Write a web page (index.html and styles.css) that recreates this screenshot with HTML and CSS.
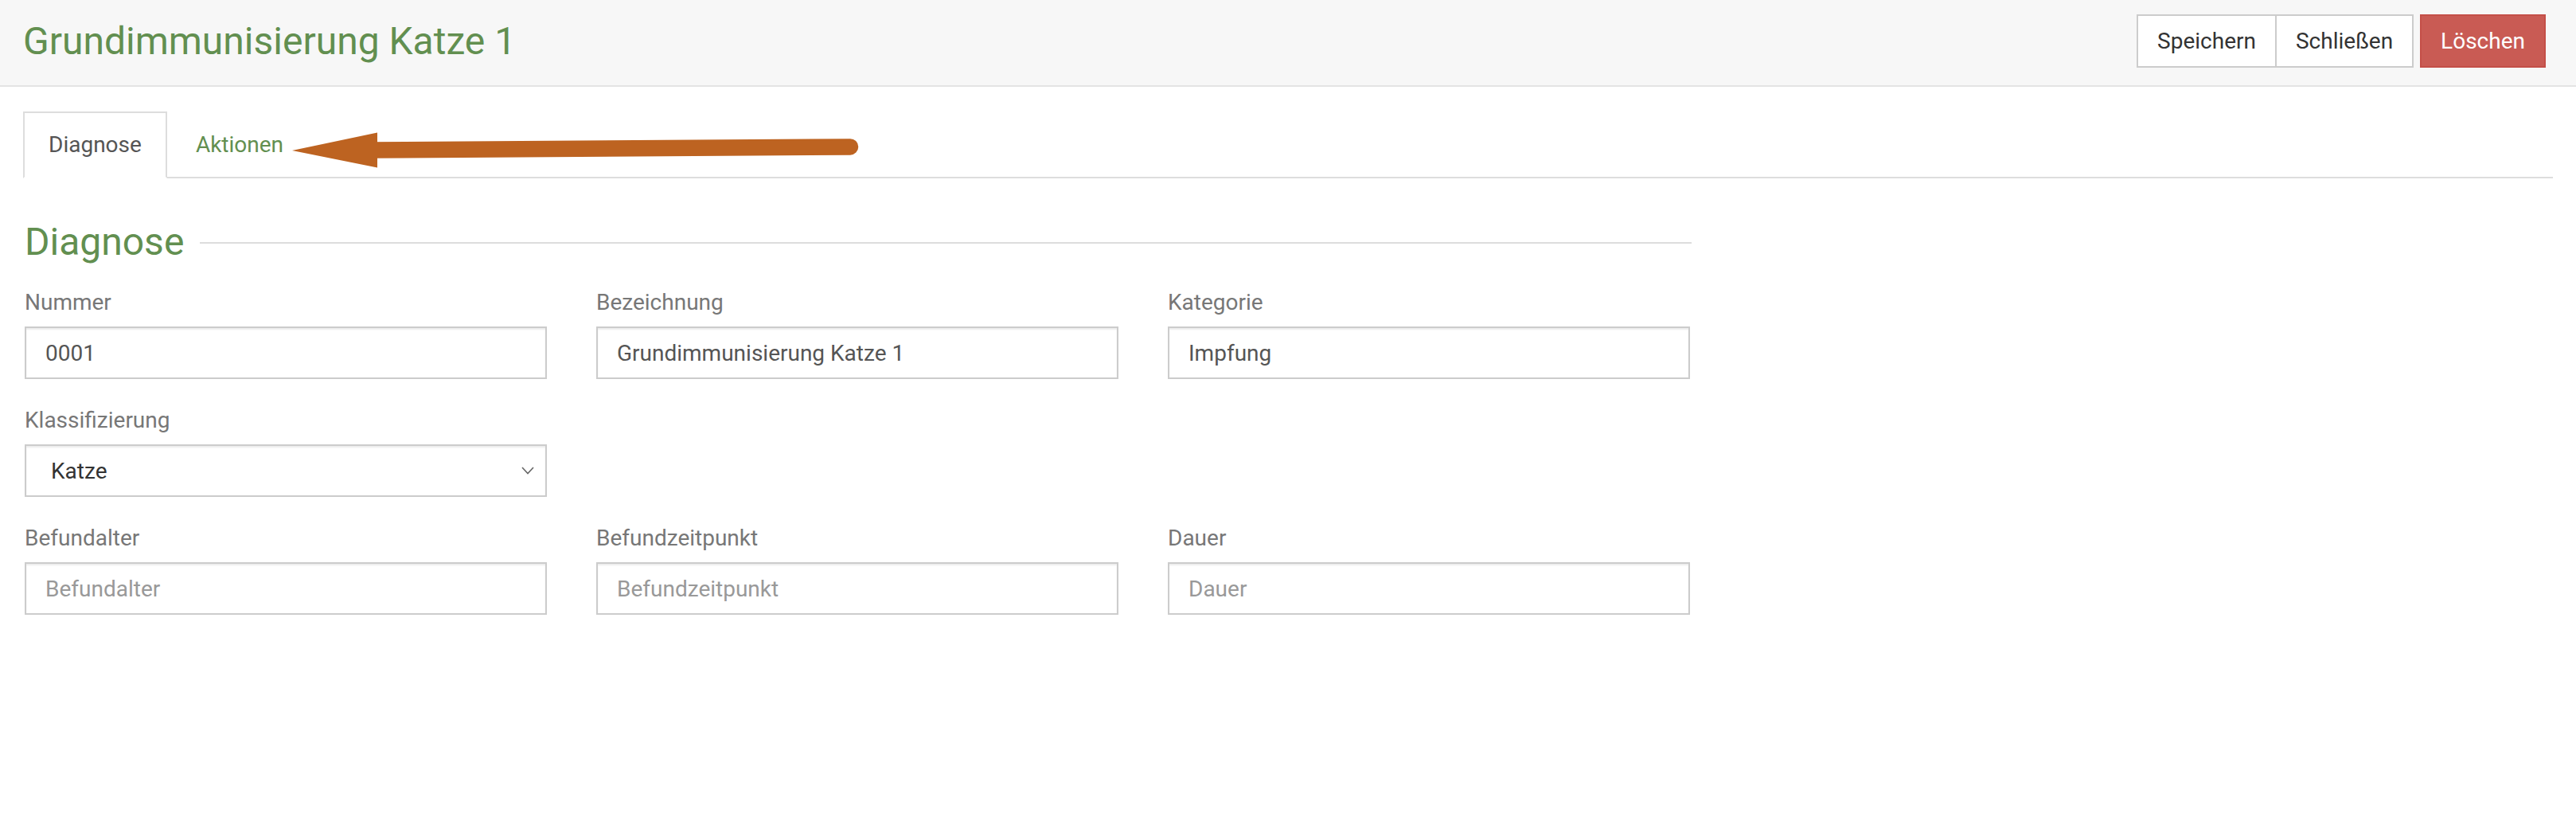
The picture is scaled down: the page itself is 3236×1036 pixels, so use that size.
FILE: index.html
```html
<!DOCTYPE html>
<html lang="de">
<head>
<meta charset="utf-8">
<title>Grundimmunisierung Katze 1</title>
<link rel="stylesheet" href="styles.css">
</head>
<body>
<div class="page">
  <header class="topbar">
    <h1 class="title">Grundimmunisierung Katze 1</h1>
    <div class="actions">
      <div class="btn-group">
        <button class="btn">Speichern</button>
        <button class="btn">Schließen</button>
      </div>
      <button class="btn btn-danger">Löschen</button>
    </div>
  </header>

  <main class="content">
    <ul class="tabs">
      <li class="tab active">Diagnose</li>
      <li class="tab link">Aktionen</li>
    </ul>

    <section class="fieldset">
      <div class="legend">
        <h2 class="legend-text">Diagnose</h2>
        <span class="legend-line"></span>
      </div>

      <div class="row">
        <div class="field">
          <label class="label">Nummer</label>
          <input class="input" type="text" value="0001">
        </div>
        <div class="field">
          <label class="label">Bezeichnung</label>
          <input class="input" type="text" value="Grundimmunisierung Katze 1">
        </div>
        <div class="field">
          <label class="label">Kategorie</label>
          <input class="input" type="text" value="Impfung">
        </div>
      </div>

      <div class="row">
        <div class="field">
          <label class="label">Klassifizierung</label>
          <div class="select-wrap">
            <select class="input select">
              <option>Katze</option>
            </select>
            <svg class="chevron" width="16" height="10" viewBox="0 0 16 10"><path d="M1 1 L8 8.5 L15 1" fill="none" stroke="#666" stroke-width="1.6"/></svg>
          </div>
        </div>
      </div>

      <div class="row">
        <div class="field">
          <label class="label">Befundalter</label>
          <input class="input" type="text" placeholder="Befundalter">
        </div>
        <div class="field">
          <label class="label">Befundzeitpunkt</label>
          <input class="input" type="text" placeholder="Befundzeitpunkt">
        </div>
        <div class="field">
          <label class="label">Dauer</label>
          <input class="input" type="text" placeholder="Dauer">
        </div>
      </div>
    </section>
  </main>

  <svg class="annotation" width="1100" height="240" viewBox="0 0 1100 240">
    <path d="M466 188.6 L1068 184.4" stroke="#bd6321" stroke-width="20.5" stroke-linecap="round" fill="none"/>
    <polygon points="367,189 474,166.5 474,210.5" fill="#bd6321"/>
  </svg>
</div>
</body>
</html>
```

FILE: styles.css
```css
* { box-sizing: border-box; }

html, body {
  margin: 0;
  padding: 0;
  background: #ffffff;
}

body {
  font-family: Roboto, "Liberation Sans", Arial, sans-serif;
  font-size: 28px;
  line-height: 40px;
  color: #333333;
}

.page {
  position: relative;
  width: 3236px;
  min-height: 1036px;
}

/* Header */
.topbar {
  height: 109px;
  background: #f7f7f7;
  border-bottom: 2px solid #e4e4e4;
  display: flex;
  align-items: center;
  justify-content: space-between;
  padding: 0 38px 4px 29px;
}

.title {
  margin: 0;
  font-size: 48px;
  line-height: 53px;
  font-weight: 400;
  color: #628f50;
}

.actions {
  display: flex;
  align-items: center;
  gap: 8px;
}

.btn-group {
  display: flex;
}

.btn {
  font-family: inherit;
  font-size: 28px;
  line-height: 39px;
  padding: 12px 24px;
  border: 2px solid #cccccc;
  background: #ffffff;
  color: #333333;
  border-radius: 0;
  margin: 0;
}

.btn-group .btn + .btn {
  margin-left: -2px;
}

.btn-danger {
  background: #c95b54;
  border-color: #c44f48;
  color: #ffffff;
}

/* Content */
.content {
  padding: 31px 29px 0 29px;
}

.tabs {
  list-style: none;
  margin: 0;
  padding: 0;
  display: flex;
  border-bottom: 2px solid #dddddd;
}

.tab {
  padding: 20px 30px;
  line-height: 40px;
  border: 2px solid transparent;
  margin-bottom: -2px;
  margin-right: 4px;
  color: #555555;
}

.tab.active {
  border-color: #dddddd;
  border-bottom-color: #ffffff;
  background: #ffffff;
}

.tab.link {
  color: #628f50;
}

.fieldset {
  width: 2096px;
  padding-left: 2px;
  margin-top: 53px;
}

.legend {
  display: flex;
  align-items: center;
  gap: 20px;
}

.legend-text {
  margin: 0;
  font-size: 48px;
  line-height: 53px;
  font-weight: 400;
  color: #628f50;
}

.legend-line {
  flex: 1;
  height: 2px;
  background: #dddddd;
  margin-top: 3px;
}

.row {
  display: grid;
  grid-template-columns: 656px 656px 656px;
  column-gap: 62px;
  margin-top: 30px;
}

.row + .row {
  margin-top: 32px;
}

.field {
  display: flex;
  flex-direction: column;
}

.label {
  color: #777777;
  font-size: 28px;
  line-height: 40px;
  margin-bottom: 10px;
}

.input {
  display: block;
  width: 100%;
  height: 66px;
  padding: 12px 24px;
  font-family: inherit;
  font-size: 28px;
  line-height: 40px;
  color: #555555;
  background: #ffffff;
  border: 2px solid #cccccc;
  border-radius: 0;
  box-shadow: inset 0 2px 2px rgba(0, 0, 0, 0.075);
  outline: none;
}

.input::placeholder {
  color: #999999;
}

.select-wrap {
  position: relative;
}

.select {
  appearance: none;
  -webkit-appearance: none;
  padding-left: 31px;
  color: #333333;
}

.chevron {
  position: absolute;
  right: 16px;
  top: 28px;
  pointer-events: none;
}

.annotation {
  position: absolute;
  left: 0;
  top: 0;
  pointer-events: none;
}
```
